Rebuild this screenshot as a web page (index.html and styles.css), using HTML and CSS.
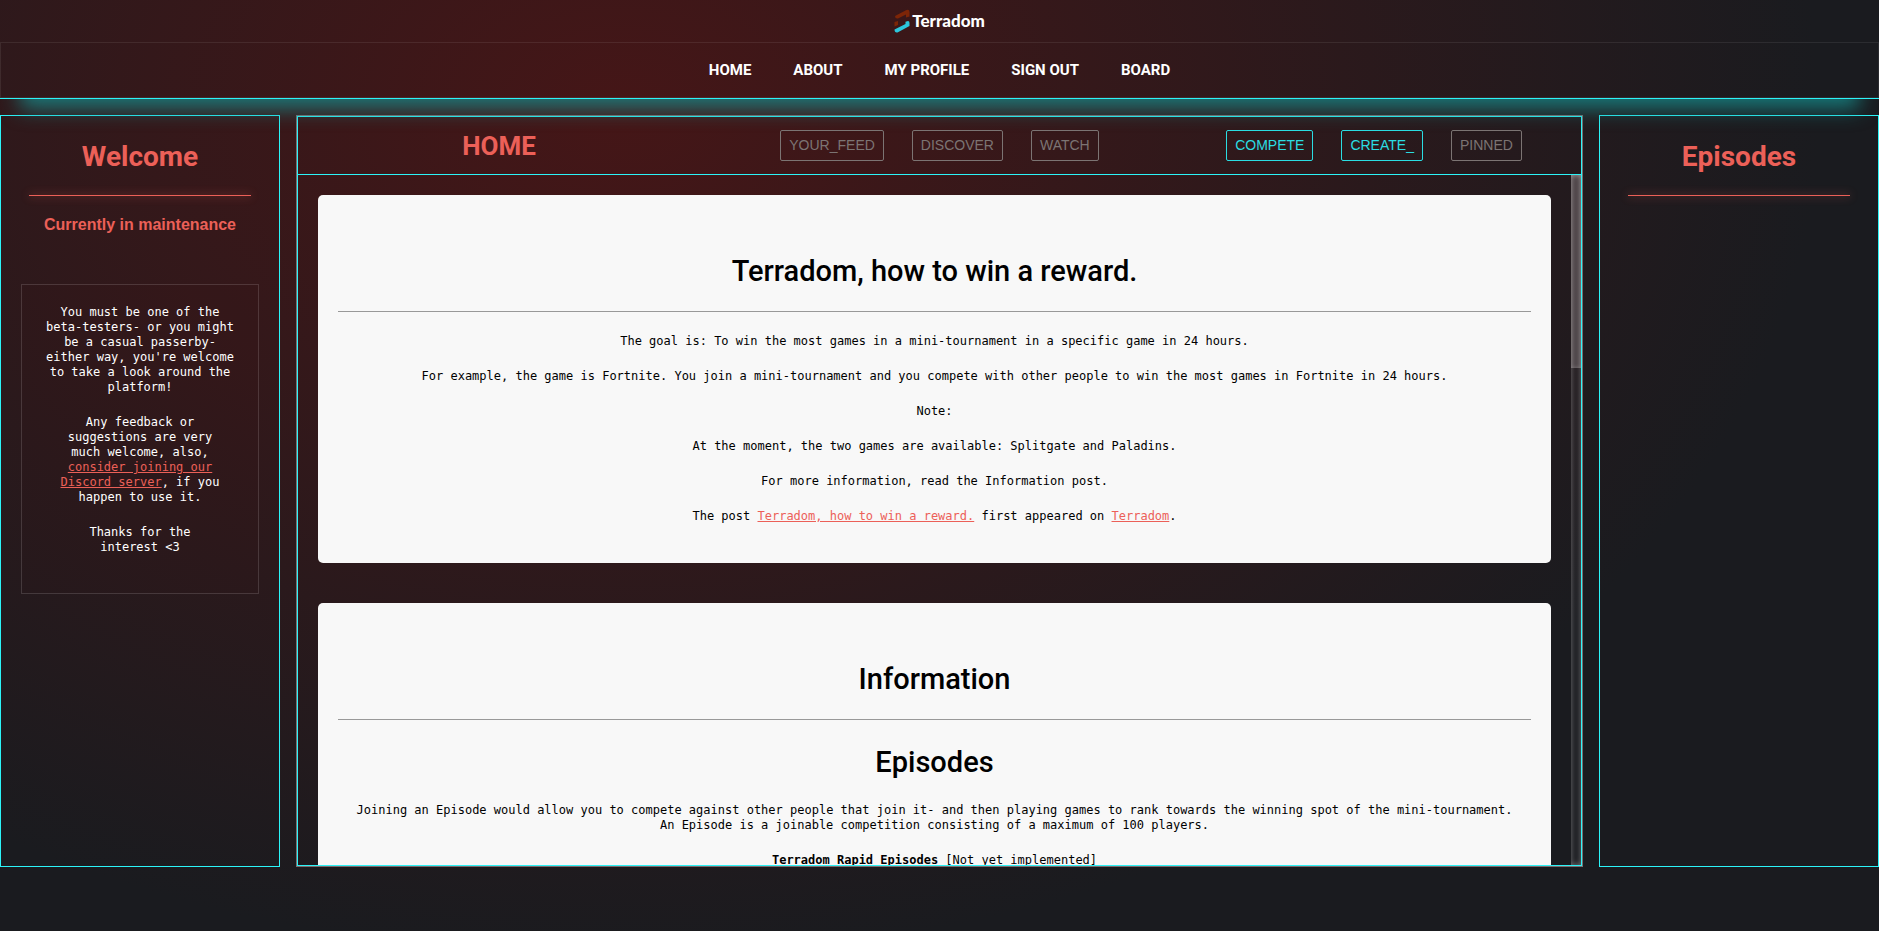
FILE: index.html
```html
<!DOCTYPE html>
<html lang="en">
<head>
<meta charset="utf-8">
<title>Terradom</title>
<link rel="stylesheet" href="styles.css">
</head>
<body>
<header class="site-header">
  <a class="brand" href="#">
    <svg class="brand-mark" viewBox="0 0 17 24" aria-hidden="true">
      <path d="M1 7L12 1.200Q15.500 0 15.500 3V7.500L12 8.500V5.500L4 9.500Q1 10 1 7Z" fill="#7d2507"/>
      <path d="M.5 13L4 12V16L.5 17.500Z" fill="#7d2507"/>
      <path d="M.5 20.500L11.500 15V12.800L14 12Q15.500 12 15.500 14V17L3.500 23.500Q.5 24 .5 20.500Z" fill="#2cc6dc"/>
    </svg>
    <span>Terradom</span>
  </a>
  <nav class="site-nav">
    <a href="#">HOME</a>
    <a href="#">ABOUT</a>
    <a href="#">MY PROFILE</a>
    <a href="#">SIGN OUT</a>
    <a href="#">BOARD</a>
  </nav>
</header>
<main class="layout">
  <aside class="panel">
    <h2 class="title">Welcome</h2>
    <hr class="glow-rule">
    <p class="status">Currently in maintenance</p>
    <div class="notice">
      <p>You must be one of the beta-testers- or you might be a casual passerby- either way, you're welcome to take a look around the platform!</p>
      <p class="narrow">Any feedback or suggestions are very much welcome, also, <a href="#">consider joining our Discord server</a>, if you happen to use it.</p>
      <p class="narrow">Thanks for the interest &lt;3</p>
    </div>
  </aside>
  <section class="feed">
    <div class="feed-bar">
      <h1 class="title">HOME</h1>
      <div class="actions">
        <button type="button">YOUR_FEED</button>
        <button type="button">DISCOVER</button>
        <button type="button">WATCH</button>
      </div>
      <div class="actions">
        <button type="button" class="active">COMPETE</button>
        <button type="button" class="active">CREATE_</button>
        <button type="button">PINNED</button>
      </div>
    </div>
    <div class="feed-scroll">
      <article class="post">
        <h2 class="title">Terradom, how to win a reward.</h2>
        <hr>
        <p>The goal is: To win the most games in a mini-tournament in a specific game in 24 hours.</p>
        <p>For example, the game is Fortnite. You join a mini-tournament and you compete with other people to win the most games in Fortnite in 24 hours.</p>
        <p>Note:</p>
        <p>At the moment, the two games are available: Splitgate and Paladins.</p>
        <p>For more information, read the Information post.</p>
        <p>The post <a href="#">Terradom, how to win a reward.</a> first appeared on <a href="#">Terradom</a>.</p>
      </article>
      <article class="post">
        <h2 class="title">Information</h2>
        <hr>
        <h3 class="title">Episodes</h3>
        <p>Joining an Episode would allow you to compete against other people that join it- and then playing games to rank towards the winning spot of the mini-tournament.<br>An Episode is a joinable competition consisting of a maximum of 100 players.</p>
        <p><strong>Terradom Rapid Episodes</strong> [Not yet implemented]</p>
      </article>
      <div class="track"><div class="thumb"></div></div>
    </div>
  </section>
  <aside class="panel">
    <h2 class="title">Episodes</h2>
    <hr class="glow-rule">
  </aside>
</main>
</body>
</html>
```
FILE: styles.css
```css
:root {
  --cyan: #2cf4f8;
  --coral: #ec6058;
  --ink: #1a1b1f;
}

* { box-sizing: border-box; }

html { background: var(--ink); }

body {
  margin: 0;
  min-height: 100vh;
  overflow: hidden;
  color: #fff;
  font: 12px/15px "DejaVu Sans Mono", monospace;
  text-align: center;
  background: radial-gradient(ellipse 1200px 850px at 620px 110px, #451617 0%, #1a1b1f 100%);
}

a { color: var(--coral); }
p { margin: 0 0 20px; }

.title {
  margin: 0;
  font: 500 28px/36px Roboto, sans-serif;
}

.site-header {
  position: relative;
  border-bottom: 1px solid var(--cyan);
  box-shadow: 0 30px 20px -20px rgba(22, 140, 140, 0.8);
}

.brand {
  display: flex;
  height: 42px;
  align-items: center;
  justify-content: center;
  gap: 1px;
  color: #fff;
  font: 900 17px/20px Lato, sans-serif;
  text-decoration: none;
}

.brand-mark { width: 17px; height: 24px; }

.site-nav {
  display: flex;
  justify-content: center;
  gap: 42px;
  padding: 17px 0;
  border: 1px solid rgba(255, 255, 255, 0.08);
}

.site-nav a {
  color: #fff;
  font: 700 15px/20px Roboto, sans-serif;
  text-decoration: none;
}

.layout {
  display: grid;
  grid-template-columns: 280px 1fr 280px;
  gap: 16px;
  height: calc(100vh - 179px);
  margin-top: 16px;
}

.panel {
  padding: 23px 20px;
  border: 1px solid var(--cyan);
}

.panel .title { color: var(--coral); font-weight: 700; }

.glow-rule {
  height: 1px;
  margin: 20px 8px 20px;
  border: 0;
  background: var(--coral);
  box-shadow: 0 0 8px rgba(236, 96, 88, 0.9);
}

.status {
  margin: 0 0 50px;
  color: var(--coral);
  font: 700 16px/18px "Liberation Sans", Arial, sans-serif;
}

.notice {
  padding: 20px 20px 18px;
  border: 1px solid rgba(255, 255, 255, 0.14);
  background: rgba(70, 15, 15, 0.06);
}

.notice .narrow { max-width: 162px; margin-inline: auto; }

.feed {
  display: flex;
  flex-direction: column;
  min-width: 0;
  min-height: 0;
  border: 1px solid var(--cyan);
  outline: 1px solid #7d6f70;
  margin: 1px;
}

.feed-bar {
  display: grid;
  grid-template-columns: 402fr 479fr 390fr;
  align-items: center;
  height: 58px;
  flex: none;
  padding-right: 12px;
  border-bottom: 1px solid var(--cyan);
}

.feed-bar .title { color: var(--coral); font-size: 26px; font-weight: 700; }

.actions { display: flex; justify-content: center; gap: 28px; }

.actions button {
  padding: 5px 8px 6px;
  border: 1px solid #7c7473;
  border-radius: 2px;
  background: none;
  color: #7c7473;
  font: 400 14px/18px "Liberation Sans", Arial, sans-serif;
}

.actions .active { border-color: #2bdde2; color: #2bdde2; }

.feed-scroll {
  position: relative;
  flex: 1;
  min-height: 0;
  overflow: hidden;
  padding: 20px 30px 20px 20px;
}

.post {
  margin-bottom: 40px;
  padding: 20px 20px 19px;
  border-radius: 5px;
  background: #f8f8f8;
  color: #000;
}

.post .title { margin: 38px 0 22px; font-size: 29px; }
.post h3.title { margin: 24px 0 23px; }

.post hr {
  height: 1px;
  margin: 0 0 22px;
  border: 0;
  background: #999;
}

.track {
  position: absolute;
  top: 0;
  right: 0;
  bottom: 0;
  width: 10px;
  box-shadow: inset 0 0 6px rgba(255, 255, 255, 0.4);
}

.thumb {
  height: 28%;
  background: rgba(140, 130, 132, 0.4);
  box-shadow: inset 0 0 4px rgba(255, 255, 255, 0.25);
}
```
